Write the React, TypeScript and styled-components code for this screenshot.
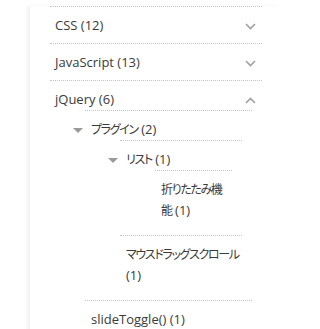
import React from "react";
import styled, { createGlobalStyle } from "styled-components";

const Global = createGlobalStyle`
  html, body { margin: 0; padding: 0; background: #fff; }
  body {
    font-family: "Open Sans", "Noto Sans CJK JP", sans-serif;
    color: #3a3a3a;
  }
`;

const Page = styled.div`
  padding: 6px 0 0 29px;
  height: 329px;
  box-sizing: border-box;
  overflow: hidden;
`;

const Panel = styled.div`
  background: #fff;
  padding: 0 0 0 20px;
  width: 251px;
  min-height: 400px;
  box-shadow: -2px 0 3px rgba(0, 0, 0, 0.05);
  border-left: 1px solid #f3f3f3;
  box-sizing: border-box;
`;

const List = styled.ul<{ $nested?: boolean }>`
  list-style: none;
  margin: ${(p) => (p.$nested ? "0 10px 0 35px" : "0")};
  padding: 0;
  width: ${(p) => (p.$nested ? "auto" : "212px")};
`;

const Item = styled.li`
  position: relative;
  border-top: 1px dotted #b9c6cb;
  padding: 8px 0 7px;
  line-height: 21px;
  font-size: 13px;
`;

const Label = styled.span<{ $top?: boolean }>`
  display: block;
  padding: ${(p) => (p.$top ? "0 20px 0 5px" : "0 0 0 6px")};
`;

const Ja = styled.span`
  font-family: "Noto Sans CJK JP", sans-serif;
  font-size: 12px;
  line-height: 0;
  font-feature-settings: "palt" 1;
  letter-spacing: -1.35px;
`;

const Chevron = styled.svg`
  position: absolute;
  right: 6px;
  top: 16px;
  width: 11px;
  height: 7px;
`;

const Caret = styled.span`
  position: absolute;
  left: -12px;
  top: 17px;
  width: 0;
  height: 0;
  border-left: 5px solid transparent;
  border-right: 5px solid transparent;
  border-top: 5px solid #9a9a9a;
`;

type Node = { ja?: string; en?: string; count: number; children?: Node[] };

const Down = () => (
  <Chevron viewBox="0 0 11 7">
    <polyline points="1,1 5.5,5.5 10,1" fill="none" stroke="#a0a0a0" strokeWidth="1.6" />
  </Chevron>
);
const Up = () => (
  <Chevron viewBox="0 0 11 7">
    <polyline points="1,6 5.5,1.5 10,6" fill="none" stroke="#a0a0a0" strokeWidth="1.6" />
  </Chevron>
);

const SubTree: React.FC<{ nodes: Node[] }> = ({ nodes }) => (
  <List $nested>
    {nodes.map((n, i) => (
      <Item key={i}>
        {n.children && <Caret />}
        <Label>
          {n.ja ? <Ja>{n.ja}</Ja> : n.en} ({n.count})
        </Label>
        {n.children && <SubTree nodes={n.children} />}
      </Item>
    ))}
  </List>
);

const jquery: Node[] = [
  {
    ja: "プラグイン",
    count: 2,
    children: [
      { ja: "リスト", count: 1, children: [{ ja: "折りたたみ機能", count: 1 }] },
      { ja: "マウスドラッグスクロール", count: 1 },
    ],
  },
  { en: "slideToggle()", count: 1 },
];

export default function App() {
  return (
    <Page>
      <Global />
      <Panel>
        <List>
          <Item>
            <Label $top>CSS (12)</Label>
            <Down />
          </Item>
          <Item>
            <Label $top>JavaScript (13)</Label>
            <Down />
          </Item>
          <Item>
            <Label $top>jQuery (6)</Label>
            <Up />
            <SubTree nodes={jquery} />
          </Item>
        </List>
      </Panel>
    </Page>
  );
}
